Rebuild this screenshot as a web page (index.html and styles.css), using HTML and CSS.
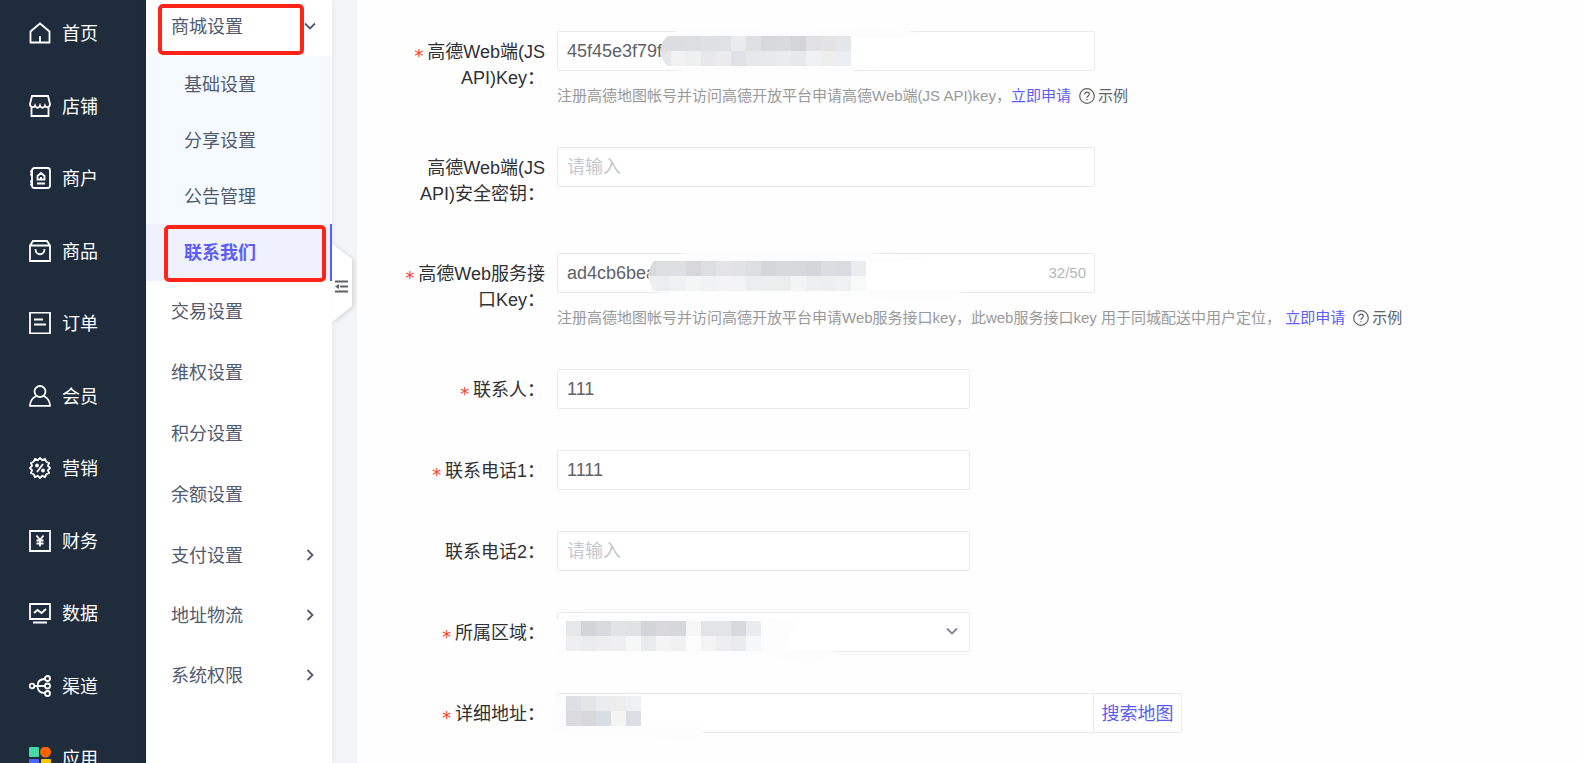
FILE: index.html
```html
<!DOCTYPE html>
<html lang="zh-CN">
<head>
<meta charset="UTF-8">
<meta name="viewport" content="width=device-width, initial-scale=1.0">
<title>联系我们</title>
<link rel="stylesheet" href="styles.css">
</head>
<body>

<nav class="sidebar">
  <a href="#"><svg viewBox="0 0 22 22"><path d="M1.5 20.5V9.5L11 1.5l9.500 8v11zM11 14v6.500"/></svg><span>首页</span></a>
  <a href="#"><svg viewBox="0 0 22 22"><path d="M3 1h16l2 8c0 4-4 4-5 1.500-1 3-4 3-5 0-1 3-4 3-5 0C5 13 1 13 1 9zM2.500 13v8h17v-8"/></svg><span>店铺</span></a>
  <a href="#"><svg viewBox="0 0 22 22"><rect x="3" y="1" width="18" height="20" rx="2.500"/><path d="M1 4.500h3M1 7.500h3M1 14.500h3M1 17.500h3M8 16.500h8M8.500 12.500V9L12 6l3.500 3v3.500zM12 10v2"/></svg><span>商户</span></a>
  <a href="#"><svg viewBox="0 0 22 22"><path d="M1 5.500L4 1h14l3 4.500V21H1zM1 5.500h20M6.500 9c0 7 9 7 9 0"/></svg><span>商品</span></a>
  <a href="#"><svg viewBox="0 0 22 22"><path d="M1 0.500h20v21H1zM5 7.500h9M5 12.500h12"/></svg><span>订单</span></a>
  <a href="#"><svg viewBox="0 0 22 22"><circle cx="11" cy="6.500" r="5.500"/><path d="M7.500 11C3 13 1 16 1 20.800h20C21 16 19 13 14.500 11"/></svg><span>会员</span></a>
  <a href="#"><svg viewBox="0 0 22 22"><path d="M11 1l2.300 2.100L16 2l1.300 2.700L20 6l-1.100 2.700L21 11l-2.100 2.300L20 16l-2.700 1.300L16 20l-2.700-1.100L11 21l-2.300-2.100L6 20l-1.300-2.700L2 16l1.100-2.700L1 11l2.100-2.300L2 6l2.700-1.300L6 2l2.700 1.100zM14 7l-6 8"/><circle cx="8" cy="8.500" r="1"/><circle cx="14" cy="13.500" r="1"/></svg><span>营销</span></a>
  <a href="#"><svg viewBox="0 0 22 22"><path d="M1 1h20v20H1zM7.500 5.500L11 10l3.500-4.500M11 10v6.500M7.500 10.500h7M7.500 13.500h7"/></svg><span>财务</span></a>
  <a href="#"><svg viewBox="0 0 22 22"><path d="M1 2h20v15H1zM4 20.500h14M5 11l3.500-3 4 3L17 7"/></svg><span>数据</span></a>
  <a href="#"><svg viewBox="0 0 22 22"><circle cx="3" cy="11" r="2.300"/><circle cx="18.500" cy="3.500" r="2.500"/><circle cx="18.500" cy="11" r="2.500"/><circle cx="18.500" cy="18.500" r="2.500"/><path d="M5.300 11H16M16 4C11 4 8.500 7 8.500 11s2.500 7 7.500 7"/></svg><span>渠道</span></a>
  <a href="#"><svg class="apps" viewBox="0 0 22 22"><rect width="10" height="10" rx="1" fill="#45d9a5"/><circle cx="16.500" cy="5" r="5.500" fill="#fa6400"/><rect y="12" width="10" height="10" rx="1" fill="#4d63fb"/><rect x="12" y="12" width="10" height="10" rx="1" fill="#f7c700"/></svg><span>应用</span></a>
</nav>

<nav class="subnav">
  <a href="#" class="parent marked"><span>商城设置</span><svg viewBox="0 0 12 12"><path d="M1 3.500l5 5 5-5"/></svg></a>
  <div class="children">
    <a href="#"><span>基础设置</span></a>
    <a href="#"><span>分享设置</span></a>
    <a href="#"><span>公告管理</span></a>
    <a href="#" class="active marked"><span>联系我们</span></a>
  </div>
  <a href="#"><span>交易设置</span></a>
  <a href="#"><span>维权设置</span></a>
  <a href="#"><span>积分设置</span></a>
  <a href="#"><span>余额设置</span></a>
  <a href="#" class="parent"><span>支付设置</span><svg viewBox="0 0 12 12"><path d="M3.500 1l5 5-5 5"/></svg></a>
  <a href="#" class="parent"><span>地址物流</span><svg viewBox="0 0 12 12"><path d="M3.500 1l5 5-5 5"/></svg></a>
  <a href="#" class="parent"><span>系统权限</span><svg viewBox="0 0 12 12"><path d="M3.500 1l5 5-5 5"/></svg></a>
  <button type="button" class="collapse" aria-label="收起菜单">
    <svg viewBox="0 0 20 78"><path class="tab" d="M0 0l20 15v47L0 78z"/><path class="lines" d="M3 37.500h13M8 42.500h8M3 47.500h13"/><path class="arrow" d="M3 42.500l4-2.500v5z"/></svg>
  </button>
</nav>

<main class="content">
  <form>
    <div class="row">
      <label for="jskey"><span class="required">*</span>高德Web端(JS API)Key：</label>
      <div class="control">
        <div class="field">
          <input type="text" id="jskey" value="45f45e3f79f">
          <svg class="mosaic" viewBox="0 0 540 60">
            <path class="smear" d="M118 -2L250 0Q330 -6 366 3L340 8 120 8zM116 34L330 34 288 41 150 41Q120 41 116 38z"/>
            <path fill="#dcdde0" d="M114 5v15H103Q105 9 111 5z"/><path fill="#e6e7ea" d="M114 35v-15H103Q105 31 111 35z"/>
            <g id="m1" transform="translate(114 5)"></g>
          </svg>
        </div>
        <p class="hint">注册高德地图帐号并访问高德开放平台申请高德Web端(JS API)key，<a href="#">立即申请</a><a href="#" class="example"><svg viewBox="0 0 16 16"><circle cx="8" cy="8" r="7.300"/><path d="M5.800 6.300c0-3 4.500-3 4.500 0 0 1.700-2.300 1.700-2.300 3.500M8 11v1.300"/></svg>示例</a></p>
      </div>
    </div>

    <div class="row">
      <label for="jssecret">高德Web端(JS API)安全密钥：</label>
      <div class="control">
        <div class="field"><input type="text" id="jssecret" placeholder="请输入"></div>
      </div>
    </div>

    <div class="row">
      <label for="webkey"><span class="required">*</span>高德Web服务接口Key：</label>
      <div class="control">
        <div class="field">
          <input type="text" id="webkey" value="ad4cb6bea">
          <svg class="mosaic" viewBox="0 0 540 60">
            <path class="smear" d="M128 -1L260 -3Q330 0 380 7L130 12zM98 35L405 37Q400 50 370 49 340 49 300 42L105 41z"/>
            <path fill="#d8d9dc" d="M99 8v15H91Q93 12 97 8z"/><path fill="#eeeff1" d="M99 38v-15H91Q93 34 97 38z"/>
            <g id="m2" transform="translate(99 8)"></g>
          </svg>
          <span class="count">32/50</span>
        </div>
        <p class="hint">注册高德地图帐号并访问高德开放平台申请Web服务接口key，此web服务接口key 用于同城配送中用户定位， <a href="#">立即申请</a><a href="#" class="example"><svg viewBox="0 0 16 16"><circle cx="8" cy="8" r="7.300"/><path d="M5.800 6.300c0-3 4.500-3 4.500 0 0 1.700-2.300 1.700-2.300 3.500M8 11v1.300"/></svg>示例</a></p>
      </div>
    </div>

    <div class="row">
      <label for="contact"><span class="required">*</span>联系人：</label>
      <div class="control">
        <div class="field short"><input type="text" id="contact" value="111"></div>
      </div>
    </div>

    <div class="row">
      <label for="phone1"><span class="required">*</span>联系电话1：</label>
      <div class="control">
        <div class="field short"><input type="text" id="phone1" value="1111"></div>
      </div>
    </div>

    <div class="row">
      <label for="phone2">联系电话2：</label>
      <div class="control">
        <div class="field short"><input type="text" id="phone2" placeholder="请输入"></div>
      </div>
    </div>

    <div class="row">
      <label for="region"><span class="required">*</span>所属区域：</label>
      <div class="control">
        <div class="field short">
          <select id="region"><option></option></select>
          <svg class="arrow-down" viewBox="0 0 12 12"><path d="M1 3.500l5 5 5-5"/></svg>
          <svg class="mosaic" viewBox="0 0 540 60">
            <path class="smear" d="M-2 8Q10 2 30 4L200 4 238 9 230 38 277 38Q272 52 250 51L200 43 0 41Q-6 22 -2 8z"/>
            <g id="m3" transform="translate(9 9)"></g>
          </svg>
        </div>
      </div>
    </div>

    <div class="row">
      <label for="address"><span class="required">*</span>详细地址：</label>
      <div class="control">
        <div class="field address">
          <input type="text" id="address">
          <button type="button">搜索地图</button>
          <svg class="mosaic" viewBox="0 0 540 60">
            <path class="smear" d="M-2 4L84 2 84 33 147 33Q148 48 130 48L90 44 5 41Q-9 40 -5 20z"/>
            <g id="m4" transform="translate(9 3)"></g>
          </svg>
        </div>
      </div>
    </div>
  </form>
</main>

<script>
// two rows of 15px cells over each hidden value
const mosaics = {
  m1: ['dcdde0 dddee0 dfe0e2 e0e1e3 e9ebec e0e0e3 d7d8dc d9dadd d5d5d9 e0e0e5 e4e3e3 e3e7ea',
       'f2f2f3 eef0f0 e8e8ea ebebed e1e2e7 e7e8ea e8e9eb ebebeb e7e8ea f0f1f3 eeeeed eaeef2'],
  m2: ['dedfe1 dedfe2 d8d8dc dddee0 e4e4e6 e2e2e4 dddee0 d5d6da d8d9dc d7d8db d5d6da dcdde0 dadbe0 ebecee',
       'ecedef f0f1f3 f4f5f5 f1f2f4 f4f4f6 f3f3f5 ecedef eceeed ebeeed f4f4f4 eeeff1 eeeeee f0f1f3 f8faf9'],
  m3: ['e6e7e9 d3d4d8 d9dadd e0e4e5 dfe1e2 d3d4d8 d9d9dc d6d7da f6f6f6 e3e4e5 e3e4e6 d8d9dd eaebee',
       'efeff1 ebecee eeeef0 efeff1 f6f8f7 e9eaec f4f4f4 f1f1f1 fcfcfc f4f4f5 eeeef0 eaebed f6f7f9'],
  m4: ['dedfe4 e4e5e7 ebeced ededee f0f1f3',
       'dbdbdd d8d8da d9dde4 f4f4f5 dddee3']
};

Object.keys(mosaics).forEach(id => {
  let html = '';
  mosaics[id].forEach((line, y) => {
    line.split(' ').forEach((color, x) => {
      html += `<rect x="${x * 15}" y="${y * 15}" width="15" height="15" fill="#${color}"/>`;
    });
  });
  document.getElementById(id).innerHTML = html;
});
</script>
</body>
</html>
```

FILE: styles.css
```css
* {
  box-sizing: border-box;
}

body {
  margin: 0;
  height: 100vh;
  display: flex;
  overflow: hidden;
  background: #f4f5f8;
  font-family: "Liberation Sans", "Noto Sans CJK SC", sans-serif;
  font-size: 18px;
  color: #303133;
}

a {
  text-decoration: none;
}

svg {
  fill: none;
  stroke: currentColor;
  flex-shrink: 0;
}

/* dark main menu */
.sidebar {
  width: 146px;
  flex-shrink: 0;
  background: #1f2c3c;
}

.sidebar a {
  display: flex;
  align-items: center;
  gap: 11px;
  height: 72px;
  padding-left: 29px;
  color: #fff;
}
.sidebar a:first-child {
  margin-top: -3px;
}
.sidebar a:nth-child(even) {
  margin-top: 1px;
}

.sidebar span,
.subnav span {
  padding-bottom: 3px;
}

.sidebar svg {
  width: 22px;
  height: 22px;
  stroke-width: 1.8;
}
.sidebar .apps {
  stroke: none;
}

/* second menu */
.subnav {
  position: relative;
  width: 186px;
  flex-shrink: 0;
  background: #fff;
  box-shadow: 0 0 6px rgba(0, 0, 0, 0.08);
}

.subnav a {
  position: relative;
  display: flex;
  align-items: center;
  justify-content: space-between;
  height: 61px;
  padding: 0 16px 0 25px;
  color: #515a6e;
}
.subnav a.parent {
  height: 60px;
}
.subnav > a:first-child {
  margin-top: -4px;
}

.subnav a svg {
  width: 12px;
  height: 12px;
  stroke-width: 1.8;
}

.subnav .children {
  background: #f4faff;
}
.subnav .children a {
  height: 56px;
  padding-left: 38px;
}
.subnav .children a.active {
  height: 57px;
  background: #f0f1ff;
  border-right: 2px solid #5c5cf6;
  color: #5c5cf6;
  font-weight: bold;
}

.marked::after {
  content: "";
  position: absolute;
  border: 4px solid #ff2318;
  border-radius: 5px;
}
.parent.marked::after {
  top: 8px;
  bottom: 1px;
  left: 12px;
  right: 28px;
}
.active.marked::after {
  top: 1px;
  bottom: -1px;
  left: 18px;
  right: 4px;
}

.collapse {
  position: absolute;
  top: 244px;
  left: 100%;
  width: 20px;
  height: 78px;
  padding: 0;
  border: none;
  background: none;
  color: #606266;
  cursor: pointer;
}
.collapse svg {
  display: block;
  width: 20px;
  height: 78px;
  overflow: visible;
  filter: drop-shadow(2px 1px 2px rgba(0, 0, 0, 0.12));
}
.collapse .tab {
  fill: #fff;
  stroke: none;
}
.collapse .lines {
  stroke-width: 2;
}
.collapse .arrow {
  fill: currentColor;
  stroke: none;
}

/* form */
.content {
  flex: 1;
  min-width: 0;
  margin-left: 25px;
  padding: 31px 38px;
  background: #fefefe;
}

.row {
  display: flex;
  gap: 12px;
  margin-bottom: 41px;
}

.row label {
  width: 150px;
  flex-shrink: 0;
  padding: 8px 0 5px;
  line-height: 26px;
  text-align: right;
}

.required {
  margin-right: 3px;
  font-family: "DejaVu Sans Mono", monospace;
  line-height: 18px;
  color: #f5412d;
  vertical-align: -4px;
}

.control {
  flex: 1;
  min-width: 0;
}

.field {
  position: relative;
  display: flex;
  max-width: 538px;
  height: 40px;
}
.field.short {
  max-width: 413px;
}
.field.address {
  max-width: 625px;
}

.field input,
.field select {
  flex: 1;
  min-width: 0;
  padding: 0 9px;
  border: 1px solid #e8eaec;
  border-radius: 2px;
  background: #fff;
  font: inherit;
  color: #606266;
  appearance: none;
  outline: none;
}
.field input::placeholder {
  color: #c5c8ce;
}

.field button {
  width: 89px;
  margin-left: -1px;
  padding: 0 0 2px;
  border: 1px solid #e8eaec;
  border-radius: 0 2px 2px 0;
  background: #fff;
  font: inherit;
  color: #5c5cf6;
  cursor: pointer;
}

.count {
  position: absolute;
  right: 9px;
  top: 0;
  line-height: 40px;
  font-size: 15px;
  color: #b4b7bd;
}

.arrow-down {
  position: absolute;
  right: 12px;
  top: 13px;
  width: 12px;
  height: 12px;
  color: #808695;
  stroke-width: 1.8;
}

.mosaic {
  position: absolute;
  top: 0;
  left: 0;
  width: 540px;
  height: 60px;
  overflow: visible;
  stroke: none;
  pointer-events: none;
}
.smear {
  fill: #fdfdfd;
}

.hint {
  margin: 0;
  padding-top: 14px;
  font-size: 15px;
  line-height: 21px;
  white-space: nowrap;
  color: #999;
}
.hint a {
  color: #5c5cf6;
}
.hint .example {
  display: inline-flex;
  align-items: center;
  gap: 3px;
  margin-left: 8px;
  vertical-align: top;
  color: #606266;
}
.hint svg {
  width: 16px;
  height: 16px;
  stroke-width: 1.2;
}
```
